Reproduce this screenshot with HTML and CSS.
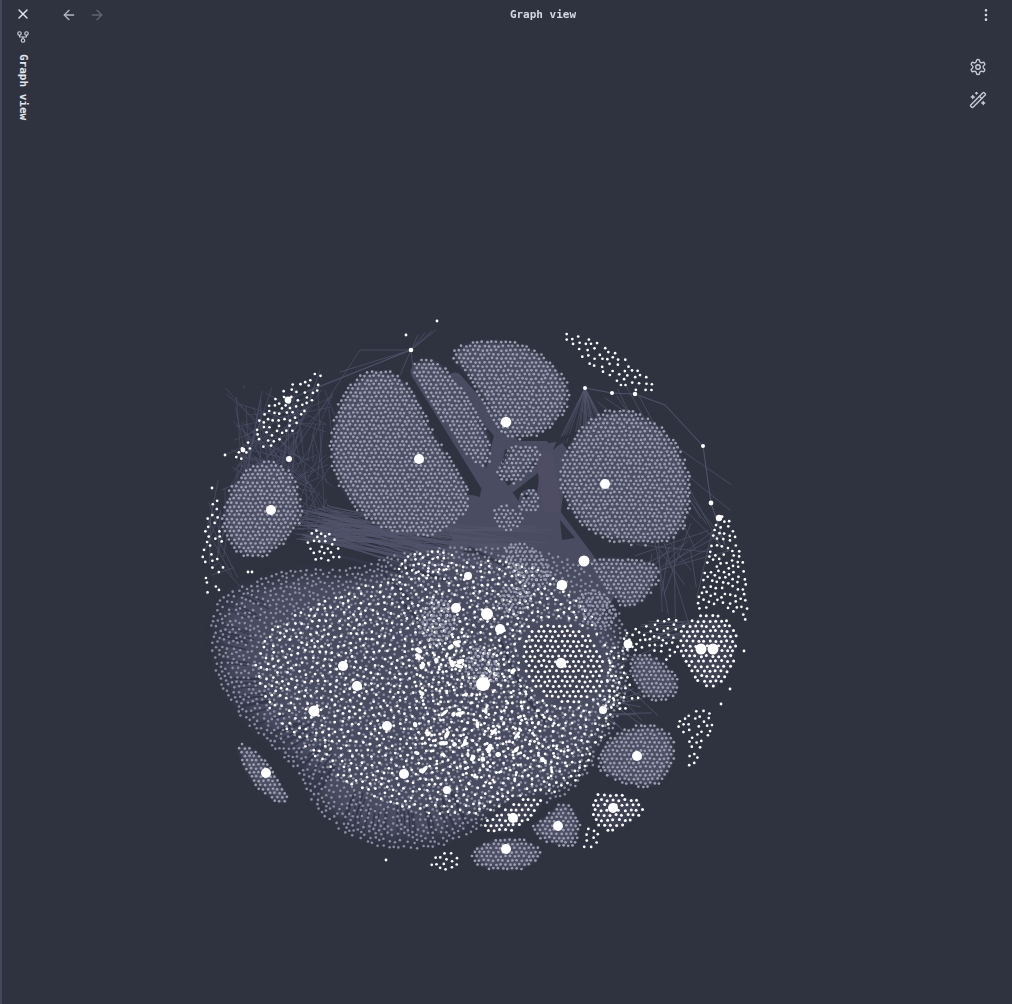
FILE: index.html
```html
<!DOCTYPE html>
<html lang="en">
<head>
    <meta charset="UTF-8">
    <title>Graph view</title>
    <link rel="stylesheet" href="styles.css">
</head>
<body>
    <div class="app">
        <aside class="sidebar">
            <button class="icon-btn side-close" aria-label="Close">
                <svg viewBox="0 0 24 24"><path d="M18 6 6 18"/><path d="m6 6 12 12"/></svg>
            </button>
            <span class="side-icon">
                <svg viewBox="0 0 24 24"><circle cx="12" cy="18" r="3"/><circle cx="6" cy="6" r="3"/><circle cx="18" cy="6" r="3"/><path d="M18 9v2c0 .6-.4 1-1 1H7c-.6 0-1-.4-1-1V9"/><path d="M12 12v3"/></svg>
            </span>
            <span class="side-title">Graph view</span>
        </aside>

        <main class="main">
            <canvas id="graph" class="graph-canvas"></canvas>

            <header class="view-header">
                <div class="nav">
                    <button class="icon-btn" aria-label="Back">
                        <svg viewBox="0 0 24 24"><path d="m12 19-7-7 7-7"/><path d="M19 12H5"/></svg>
                    </button>
                    <button class="icon-btn dim" aria-label="Forward">
                        <svg viewBox="0 0 24 24"><path d="M5 12h14"/><path d="m12 5 7 7-7 7"/></svg>
                    </button>
                </div>
                <div class="view-title">Graph view</div>
                <button class="icon-btn more" aria-label="More options">
                    <svg viewBox="0 0 24 24"><circle cx="12" cy="12" r="1"/><circle cx="12" cy="5" r="1"/><circle cx="12" cy="19" r="1"/></svg>
                </button>
            </header>

            <div class="graph-controls">
                <button class="icon-btn big" aria-label="Open graph settings">
                    <svg viewBox="0 0 24 24"><path d="M12.22 2h-.44a2 2 0 0 0-2 2v.18a2 2 0 0 1-1 1.73l-.43.25a2 2 0 0 1-2 0l-.15-.08a2 2 0 0 0-2.73.73l-.22.38a2 2 0 0 0 .73 2.73l.15.1a2 2 0 0 1 1 1.72v.51a2 2 0 0 1-1 1.74l-.15.09a2 2 0 0 0-.73 2.73l.22.38a2 2 0 0 0 2.73.73l.15-.08a2 2 0 0 1 2 0l.43.25a2 2 0 0 1 1 1.73V20a2 2 0 0 0 2 2h.44a2 2 0 0 0 2-2v-.18a2 2 0 0 1 1-1.73l.43-.25a2 2 0 0 1 2 0l.15.08a2 2 0 0 0 2.73-.73l.22-.39a2 2 0 0 0-.73-2.73l-.15-.08a2 2 0 0 1-1-1.74v-.5a2 2 0 0 1 1-1.74l.15-.09a2 2 0 0 0 .73-2.73l-.22-.38a2 2 0 0 0-2.73-.73l-.15.08a2 2 0 0 1-2 0l-.43-.25a2 2 0 0 1-1-1.73V4a2 2 0 0 0-2-2z"/><circle cx="12" cy="12" r="3"/></svg>
                </button>
                <button class="icon-btn big" aria-label="Animate">
                    <svg viewBox="0 0 24 24"><path d="m21.64 3.64-1.28-1.28a1.21 1.21 0 0 0-1.72 0L2.36 18.64a1.21 1.21 0 0 0 0 1.72l1.28 1.28a1.2 1.2 0 0 0 1.72 0L21.64 5.36a1.2 1.2 0 0 0 0-1.72"/><path d="m14 7 3 3"/><path d="M5 6v4"/><path d="M19 14v4"/><path d="M10 2v2"/><path d="M7 8H3"/><path d="M21 16h-4"/><path d="M11 3H9"/></svg>
                </button>
            </div>
        </main>
    </div>

    <script src="script.js"></script>
</body>
</html>
```

FILE: styles.css
```css
html, body {
    height: 100%;
    margin: 0;
}
body {
    background: #2f3340;
    color: #e4e6ee;
    font-family: 'DejaVu Sans Mono', monospace;
    overflow: hidden;
}
.app {
    display: flex;
    height: 100%;
}
.sidebar {
    width: 41px;
    flex: none;
    border-left: 2px solid #44465c;
    display: flex;
    flex-direction: column;
    align-items: center;
    padding: 6px 3px 0 0;
    box-sizing: content-box;
}
.side-close svg {
    width: 16px;
    height: 16px;
}
.icon-btn.side-close {
    color: #e4e6ee;
}
.side-icon {
    display: flex;
    margin-top: 8px;
    color: #c9cbd6;
}
.side-icon svg {
    width: 14px;
    height: 14px;
}
.side-title {
    writing-mode: vertical-rl;
    font-size: 11px;
    font-weight: bold;
    margin-top: 10px;
    line-height: 14px;
}
svg {
    fill: none;
    stroke: currentColor;
    stroke-width: 2;
    stroke-linecap: round;
    stroke-linejoin: round;
    display: block;
}
.icon-btn {
    background: none;
    border: none;
    padding: 0;
    color: #b4b6c2;
    display: flex;
}
.icon-btn.dim {
    color: #62646f;
}
.main {
    flex: 1;
    position: relative;
}
.graph-canvas {
    position: absolute;
    top: 0;
    left: 0;
}
.view-header {
    position: relative;
    height: 30px;
    display: flex;
    align-items: center;
    justify-content: space-between;
    padding: 0 18px 0 15px;
}
.nav {
    display: flex;
    gap: 12px;
}
.nav svg {
    width: 16px;
    height: 16px;
}
.view-title {
    font-size: 11px;
    font-weight: bold;
    color: #d6d8e2;
    position: absolute;
    left: 28px;
    right: 0;
    top: 8px;
    text-align: center;
    line-height: 14px;
    pointer-events: none;
}
.more svg {
    width: 16px;
    height: 16px;
}
.icon-btn.more {
    color: #d6d8e2;
}
.graph-controls {
    position: absolute;
    top: 58px;
    right: 25px;
    display: flex;
    flex-direction: column;
    gap: 15px;
}
.icon-btn.big {
    color: #c9cbd6;
}
.icon-btn.big svg {
    width: 18px;
    height: 18px;
    stroke-width: 1.8;
}
```

FILE: script.js
```js
// Obsidian style graph: blobs of notes around hubs, drawn on one canvas
const canvas = document.getElementById("graph");
const box = canvas.getBoundingClientRect();
canvas.width = window.innerWidth - box.left;
canvas.height = window.innerHeight;
const ctx = canvas.getContext("2d");
ctx.translate(-box.left, 0);
ctx.lineCap = "round";

const GREY = "#9c9eb2";
const WHITE = "#ffffff";
const EDGE = "#50526a";
const TINT = "#4d4f64";

let seed = 7;
function rand() {
    seed = (seed + 0x6D2B79F5) | 0;
    let t = Math.imul(seed ^ (seed >>> 15), 1 | seed);
    t = (t + Math.imul(t ^ (t >>> 7), 61 | t)) ^ t;
    return ((t ^ (t >>> 14)) >>> 0) / 4294967296;
}

function smoothPath(pts) {
    const path = new Path2D();
    const last = pts[pts.length - 1];
    path.moveTo((last[0] + pts[0][0]) / 2, (last[1] + pts[0][1]) / 2);
    pts.forEach((p, i) => {
        const n = pts[(i + 1) % pts.length];
        path.quadraticCurveTo(p[0], p[1], (p[0] + n[0]) / 2, (p[1] + n[1]) / 2);
    });
    return path;
}

function inside(path, x, y) {
    return ctx.isPointInPath(path, x - box.left, y);
}

function dot(x, y, r, color) {
    ctx.fillStyle = color;
    ctx.beginPath();
    ctx.arc(x, y, r, 0, Math.PI * 2);
    ctx.fill();
}

function line(a, b, width, color) {
    ctx.strokeStyle = color || EDGE;
    ctx.lineWidth = width;
    ctx.beginPath();
    ctx.moveTo(a[0], a[1]);
    ctx.lineTo(b[0], b[1]);
    ctx.stroke();
}

function softFill(pts, color, blur) {
    ctx.filter = "blur(" + blur + "px)";
    ctx.fillStyle = color;
    ctx.fill(smoothPath(pts));
    ctx.filter = "none";
}

// pull an outline towards its centre by some pixels, negative pushes it out
function inset(pts, px) {
    const cx = pts.reduce((s, p) => s + p[0], 0) / pts.length;
    const cy = pts.reduce((s, p) => s + p[1], 0) / pts.length;
    return pts.map(p => {
        const d = Math.hypot(p[0] - cx, p[1] - cy);
        const k = Math.max(0, (d - px) / d);
        return [cx + (p[0] - cx) * k, cy + (p[1] - cy) * k];
    });
}

// hex grid with some jitter, clipped by the outline
function fillDots(pts, spacing, r, color) {
    const path = smoothPath(pts);
    const xs = pts.map(p => p[0]);
    const ys = pts.map(p => p[1]);
    const rowH = spacing * 0.866;
    let row = 0;
    for (let y = Math.min(...ys); y < Math.max(...ys); y += rowH, row++) {
        for (let x = Math.min(...xs); x < Math.max(...xs); x += spacing) {
            const px = x + (row % 2 ? spacing / 2 : 0) + (rand() - 0.5) * spacing * 0.25;
            const py = y + (rand() - 0.5) * spacing * 0.25;
            if (inside(path, px, py)) dot(px, py, r, color);
        }
    }
}

function blob(pts, tint, spacing, r, color) {
    if (tint) softFill(inset(pts, 4), tint, 2);
    fillDots(pts, spacing, r, color);
}

// filled with notes later, the scatter stays out of them
const occupied = [];

function scatter(pts, count, minDist, r, color) {
    const path = smoothPath(pts);
    const xs = pts.map(p => p[0]);
    const ys = pts.map(p => p[1]);
    const x0 = Math.min(...xs), x1 = Math.max(...xs), y0 = Math.min(...ys), y1 = Math.max(...ys);
    const placed = [];
    for (let i = 0; i < count * 14 && placed.length < count; i++) {
        const x = x0 + rand() * (x1 - x0);
        const y = y0 + rand() * (y1 - y0);
        if (!inside(path, x, y)) continue;
        if (occupied.some(o => inside(o, x, y))) continue;
        if (placed.some(p => (p[0] - x) ** 2 + (p[1] - y) ** 2 < minDist * minDist)) continue;
        placed.push([x, y]);
        dot(x, y, r, color);
    }
    return placed;
}

function randomIn(x0, y0, x1, y1) {
    return [x0 + rand() * (x1 - x0), y0 + rand() * (y1 - y0)];
}

// ---- outlines ----
const greyBlobs = [
    [[327, 450], [338, 398], [362, 370], [392, 368], [416, 392], [428, 422], [448, 455], [474, 492], [464, 516], [440, 536], [408, 535], [368, 524], [338, 490]],
    [[410, 360], [435, 356], [462, 385], [496, 445], [484, 478], [445, 425], [416, 380]],
    [[447, 352], [470, 340], [505, 338], [540, 350], [566, 376], [573, 398], [555, 428], [533, 438], [506, 441], [488, 412], [465, 372]],
    [[495, 480], [501, 452], [520, 443], [545, 449], [535, 468], [517, 486]],
    [[556, 482], [568, 438], [595, 412], [627, 407], [662, 424], [688, 460], [693, 502], [682, 537], [650, 547], [608, 543], [573, 522]],
    [[220, 516], [233, 478], [265, 458], [292, 468], [305, 506], [297, 532], [271, 556], [245, 560], [226, 542]],
    [[583, 558], [625, 556], [663, 564], [658, 586], [631, 614], [608, 596]],
    [[628, 656], [650, 651], [672, 669], [683, 688], [667, 702], [642, 699], [630, 678]],
    [[596, 757], [606, 738], [640, 722], [668, 728], [677, 747], [672, 772], [653, 790], [626, 785], [601, 775]],
    [[526, 830], [550, 811], [564, 797], [583, 820], [575, 849], [552, 846]],
    [[470, 850], [488, 839], [520, 836], [548, 853], [528, 869], [506, 873], [474, 866]],
    [[235, 740], [256, 750], [277, 774], [291, 802], [283, 806], [260, 792], [243, 770]]
];
const whiteBlobs = [
    [[521, 643], [536, 625], [560, 621], [589, 632], [605, 657], [604, 684], [584, 702], [559, 705], [536, 691], [523, 667]],
    [[675, 637], [689, 618], [713, 611], [735, 626], [739, 650], [728, 679], [710, 692], [696, 681], [680, 658]],
    [[590, 807], [599, 790], [617, 793], [649, 802], [634, 822], [610, 835], [594, 824]],
    [[479, 825], [512, 801], [542, 795], [545, 804], [520, 829], [498, 837]]
];
// loose notes keep a few pixels away from every blob
greyBlobs.concat(whiteBlobs).forEach(p => occupied.push(smoothPath(inset(p, -4))));

// ---- big soft region at the bottom left ----
const fuzzy = [[208, 625], [222, 592], [262, 578], [300, 566], [345, 572], [400, 552], [470, 545], [560, 550], [610, 590], [635, 650], [620, 720], [590, 775], [560, 800], [500, 815], [450, 845], [415, 850], [365, 846], [318, 815], [295, 765], [255, 733], [218, 690]];
softFill(inset(fuzzy, 12), "#494b60", 7);

// ---- edge bands between the grey blobs ----
const bands = [
    [[418, 372], [490, 488], 15], [[455, 380], [512, 445], 15], [[500, 440], [485, 505], 14],
    [[505, 445], [545, 445], 8], [[540, 452], [560, 455], 16], [[555, 455], [548, 510], 26],
    [[545, 505], [590, 565], 17], [[535, 470], [490, 505], 8], [[490, 500], [455, 550], 16],
    [[480, 505], [560, 560], 10], [[495, 490], [530, 540], 26], [[530, 500], [570, 560], 22],
    [[470, 520], [590, 590], 50]
];
bands.forEach(b => line(b[0], b[1], b[2], "#4a4c61"));
line([545, 460], [552, 505], 18, "#4e4d63");

// thin fans and tangles
for (let i = 0; i < 110; i++) line(randomIn(225, 385, 335, 530), randomIn(225, 385, 335, 530), 0.6, "#4f516a");
for (let i = 0; i < 14; i++) line(randomIn(205, 480, 225, 590), randomIn(205, 480, 240, 590), 0.7, "#4f516a");
for (let i = 0; i < 90; i++) line(randomIn(295, 505, 335, 540), randomIn(430, 525, 560, 585), 0.7, "#53556b");
for (let i = 0; i < 8; i++) line(randomIn(570, 385, 670, 410), randomIn(680, 470, 735, 560), 0.7, "#53556b");
for (let i = 0; i < 22; i++) line(randomIn(640, 520, 730, 560), randomIn(620, 540, 700, 640), 0.7, "#53556b");
for (let i = 0; i < 24; i++) line([585, 388], randomIn(555, 430, 610, 450), 0.6, "#53556b");
for (let i = 0; i < 30; i++) line(randomIn(510, 620, 600, 730), randomIn(590, 640, 660, 740), 0.8, "#53556b");
for (let i = 0; i < 12; i++) line(randomIn(680, 620, 700, 640), randomIn(640, 620, 660, 650), 0.8, "#53556b");
[[361, 350], [340, 372], [305, 392], [287, 400], [418, 335], [425, 333], [432, 331], [436, 330], [414, 378], [400, 375]].forEach(p => line([411, 350], p, 0.8));
[[288, 400], [320, 370], [360, 350], [250, 450], [222, 490]].forEach(p => line([289, 459], p, 0.7));
[[585, 388], [612, 393], [635, 394], [665, 405], [703, 446], [711, 503], [725, 545]].reduce((a, b) => { line(a, b, 1.1); return b; });

// ---- dark streaks on the outside of the soft region ----
const fuzzyPath = smoothPath(fuzzy);
const cx = 395, cy = 680;
for (let i = 0; i < 80; i++) {
    const a = 1.1 + rand() * 2.6;
    let edge = 60;
    while (edge < 260 && inside(fuzzyPath, cx + Math.cos(a) * edge, cy + Math.sin(a) * edge)) edge += 3;
    const from = edge - 34 - rand() * 14;
    line([cx + Math.cos(a) * from, cy + Math.sin(a) * from], [cx + Math.cos(a) * (edge - 4), cy + Math.sin(a) * (edge - 4)], 1 + rand() * 0.8, "#34374a");
}
[[[382, 572], [412, 602]], [[340, 556], [400, 572]], [[400, 566], [446, 580]], [[500, 640], [522, 690]], [[525, 695], [545, 722]], [[470, 548], [505, 566]], [[400, 600], [418, 620]]].forEach(l => line(l[0], l[1], 3, "#34374a"));

// ---- soft region dots ----
scatter(fuzzy, 3000, 4.1, 1.3, "#8a8ca0");

const whiteArea = [[252, 655], [280, 618], [345, 592], [420, 568], [520, 556], [590, 600], [622, 690], [590, 775], [540, 800], [480, 815], [420, 815], [345, 785], [290, 735], [258, 695]];
scatter(whiteArea, 1200, 5.6, 1.4, WHITE);

const core = [[415, 640], [470, 620], [540, 700], [585, 770], [520, 785], [445, 790], [415, 730]];
scatter(core, 150, 4, 1.5, WHITE);
for (let i = 0; i < 42; i++) {
    const p = randomIn(415, 640, 545, 780);
    ctx.fillStyle = WHITE;
    ctx.beginPath();
    ctx.ellipse(p[0], p[1], 2 + rand() * 3, 1.5 + rand(), rand() * 3, 0, Math.PI * 2);
    ctx.fill();
}

// ---- blobs ----
greyBlobs.forEach(p => blob(p, TINT, 4.7, 1.35, GREY));
whiteBlobs.forEach(p => blob(p, "#404255", 5.8, 1.5, WHITE));

// dark gaps left between the edge bands
[[505, 460, 512, 445, 498, 470], [575, 432, 558, 438, 553, 450], [521, 500, 527, 490, 530, 498], [560, 520, 575, 538, 562, 540]].forEach(t => {
    ctx.fillStyle = "#2f3340";
    ctx.beginPath();
    ctx.moveTo(t[0], t[1]);
    ctx.lineTo(t[2], t[3]);
    ctx.lineTo(t[4], t[5]);
    ctx.fill();
});

// patches of grey notes in the mixed middle
[
    [[490, 512], [508, 502], [526, 518], [515, 532], [495, 528]],
    [[515, 500], [535, 482], [542, 510], [525, 515]],
    [[495, 545], [530, 540], [560, 580], [520, 590]],
    [[418, 610], [440, 592], [462, 620], [440, 650], [420, 640]],
    [[462, 650], [490, 645], [505, 680], [470, 698]],
    [[570, 590], [610, 590], [620, 625], [590, 630]],
    [[500, 580], [540, 590], [520, 620], [495, 610]]
].forEach(p => fillDots(p, 4.6, 1.3, GREY));

// ---- loose white notes around the rim ----
[
    [[[556, 330], [590, 338], [632, 362], [662, 392], [625, 390], [590, 366]], 85],
    [[[252, 442], [262, 410], [285, 388], [325, 365], [318, 395], [300, 425], [270, 450]], 78],
    [[[232, 462], [240, 442], [255, 440], [246, 458]], 9],
    [[[199, 597], [205, 510], [220, 492], [226, 560], [224, 592]], 30],
    [[[692, 625], [707, 560], [722, 500], [745, 560], [750, 625], [735, 612], [712, 600]], 150],
    [[[668, 722], [720, 702], [706, 745], [685, 782], [690, 740]], 48],
    [[[424, 867], [440, 852], [460, 854], [458, 871]], 24],
    [[[580, 848], [590, 822], [602, 832], [592, 852]], 15],
    [[[305, 532], [330, 528], [345, 562], [312, 565]], 28],
    [[[600, 640], [680, 612], [690, 640], [610, 735]], 95],
    [[[390, 560], [450, 545], [460, 570], [400, 580]], 40]
].forEach(c => scatter(c[0], c[1], 4.6, 1.35, WHITE));

[[437, 321], [406, 335], [386, 860], [744, 651], [730, 689], [721, 704], [212, 488], [225, 455], [248, 572], [252, 572]].forEach(p => dot(p[0], p[1], 1.4, WHITE));

// ---- hubs ----
[
    [419, 459, 5], [506, 422, 5.3], [605, 484, 5], [271, 510, 5], [584, 561, 5.5], [562, 585, 5.3],
    [456, 608, 5], [487, 614, 6], [500, 629, 5], [628, 644, 4.5], [343, 666, 5], [357, 686, 5],
    [314, 711, 5.5], [387, 726, 5], [404, 774, 5], [447, 790, 4], [561, 663, 5.2], [701, 649, 5.5],
    [713, 649, 5.5], [637, 756, 5], [613, 808, 5], [558, 826, 5], [513, 818, 5], [506, 849, 5],
    [266, 773, 5], [483, 684, 7], [468, 576, 4], [411, 350, 2.3], [289, 459, 3], [288, 400, 3.4],
    [711, 503, 2.4], [585, 388, 2], [612, 393, 2], [635, 394, 2.2], [703, 446, 2], [603, 710, 4],
    [719, 518, 3.2], [243, 450, 2.4]
].forEach(h => dot(h[0], h[1], h[2], WHITE));
```
